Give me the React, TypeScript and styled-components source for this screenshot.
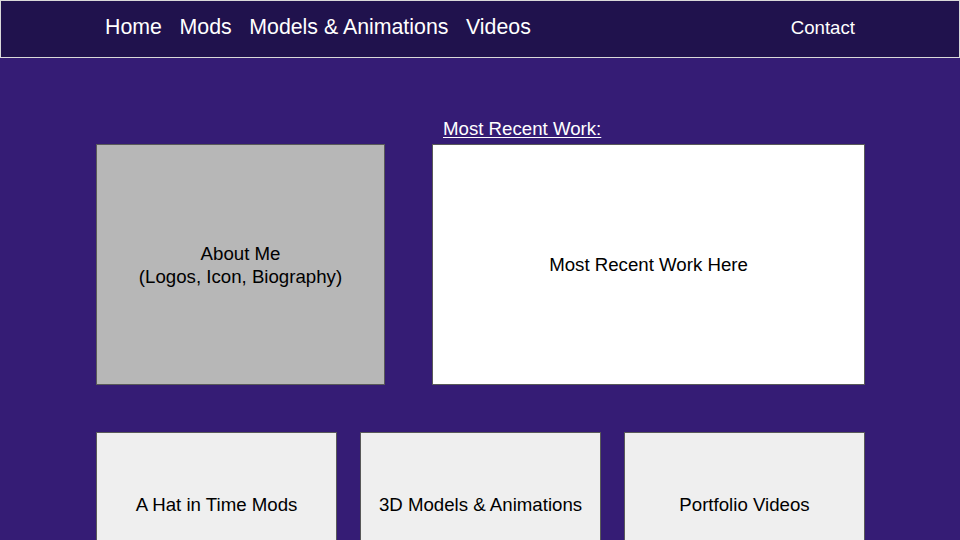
import React from "react";
import styled, { createGlobalStyle } from "styled-components";

const GlobalStyle = createGlobalStyle`
  html, body {
    margin: 0;
    padding: 0;
    background: #351c75;
    overflow: hidden;
  }
  body {
    font-family: "Liberation Sans", Arial, sans-serif;
  }
  * { box-sizing: border-box; }
`;

const Page = styled.div`
  width: 960px;
  height: 540px;
  background: #351c75;
  overflow: hidden;
`;

const Header = styled.header`
  height: 58px;
  background: #20124d;
  border: 1px solid #d9d9d9;
  display: flex;
  align-items: center;
  justify-content: space-between;
  padding: 0 104px 2px 104px;
`;

const Nav = styled.nav`
  display: flex;
  gap: 17.6px;
`;

const NavLink = styled.a<{ $small?: boolean }>`
  color: #ffffff;
  text-decoration: none;
  font-size: ${(p) => (p.$small ? "18.67px" : "21.33px")};
  line-height: 1;
  white-space: nowrap;
`;

const Main = styled.main`
  padding: 0 95px 0 96px;
`;

const TopGrid = styled.section`
  margin-top: 58px;
  display: grid;
  grid-template-columns: 289px 433px;
  grid-template-rows: 24px 241px;
  column-gap: 47px;
  row-gap: 4px;
`;

const Label = styled.div`
  grid-column: 2;
  grid-row: 1;
  padding-left: 11px;
  color: #ffffff;
  font-size: 18.67px;
  line-height: 26px;
  text-decoration: underline;
  text-underline-offset: 2px;
`;

const Card = styled.div<{ $bg: string; $col?: number }>`
  grid-row: 2;
  grid-column: ${(p) => p.$col ?? "auto"};
  background: ${(p) => p.$bg};
  border: 1px solid #595959;
  display: flex;
  align-items: center;
  justify-content: center;
  text-align: center;
  color: #000000;
  font-size: 18.67px;
  line-height: 23px;
`;

const BottomRow = styled.section`
  margin-top: 47px;
  display: grid;
  grid-template-columns: 241px 241px 241px;
  column-gap: 23px;
`;

const Tile = styled.div`
  height: 144px;
  background: #efefef;
  border: 1px solid #595959;
  display: flex;
  align-items: center;
  justify-content: center;
  color: #000000;
  font-size: 18.67px;
  line-height: 23px;
`;

export default function App() {
  return (
    <Page>
      <GlobalStyle />
      <Header>
        <Nav>
          <NavLink href="#">Home</NavLink>
          <NavLink href="#">Mods</NavLink>
          <NavLink href="#">Models &amp; Animations</NavLink>
          <NavLink href="#">Videos</NavLink>
        </Nav>
        <NavLink href="#" $small>
          Contact
        </NavLink>
      </Header>
      <Main>
        <TopGrid>
          <Label>Most Recent Work:</Label>
          <Card $bg="#b7b7b7" $col={1}>
            About Me
            <br />
            (Logos, Icon, Biography)
          </Card>
          <Card $bg="#ffffff" $col={2}>
            Most Recent Work Here
          </Card>
        </TopGrid>
        <BottomRow>
          <Tile>A Hat in Time Mods</Tile>
          <Tile>3D Models &amp; Animations</Tile>
          <Tile>Portfolio Videos</Tile>
        </BottomRow>
      </Main>
    </Page>
  );
}
